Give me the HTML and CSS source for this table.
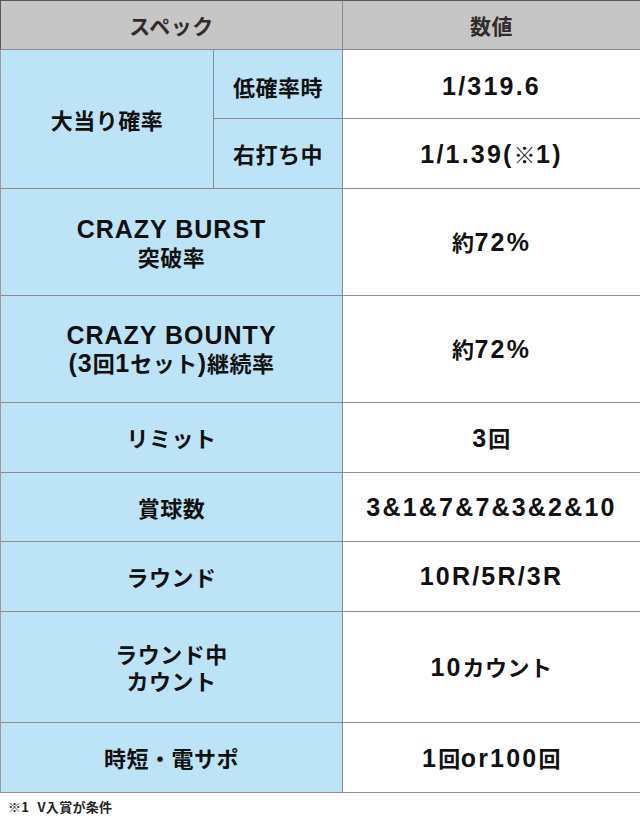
FILE: index.html
```html
<!DOCTYPE html>
<html lang="ja">
<head>
<meta charset="utf-8">
<link rel="stylesheet" href="styles.css">
</head>
<body>
<div class="spec">
  <div class="cell head span2">スペック</div>
  <div class="cell head last">数値</div>

  <div class="cell key rows2">大当り確率</div>
  <div class="cell key first">低確率時</div>
  <div class="cell val last first"><span class="n">1/319.6</span></div>
  <div class="cell key">右打ち中</div>
  <div class="cell val last"><span><span class="n">1/1.39(</span>※<span class="n">1)</span></span></div>

  <div class="cell key span2"><span class="line"><span class="n">CRAZY BURST</span></span><span class="line">突破率</span></div>
  <div class="cell val last"><span>約<span class="n">72%</span></span></div>

  <div class="cell key span2"><span class="line"><span class="n">CRAZY BOUNTY</span></span><span class="line"><span class="n">(3</span>回<span class="n">1</span>セット<span class="n">)</span>継続率</span></div>
  <div class="cell val last"><span>約<span class="n">72%</span></span></div>

  <div class="cell key span2">リミット</div>
  <div class="cell val last"><span><span class="n">3</span>回</span></div>

  <div class="cell key span2">賞球数</div>
  <div class="cell val last"><span class="n">3&amp;1&amp;7&amp;7&amp;3&amp;2&amp;10</span></div>

  <div class="cell key span2">ラウンド</div>
  <div class="cell val last"><span class="n">10R/5R/3R</span></div>

  <div class="cell key span2"><span class="line">ラウンド中<br>カウント</span></div>
  <div class="cell val last"><span><span class="n">10</span>カウント</span></div>

  <div class="cell key span2">時短・電サポ</div>
  <div class="cell val last"><span><span class="n">1</span>回<span class="n">or100</span>回</span></div>
</div>
<p class="note">※1 V入賞が条件</p>
</body>
</html>
```
FILE: styles.css
```css
html, body {
  margin: 0;
  padding: 0;
  background: #ffffff;
}

body {
  width: 640px;
  font-family: "Liberation Sans", "Noto Sans CJK JP", sans-serif;
  font-weight: bold;
  color: #111111;
}

.spec {
  display: grid;
  grid-template-columns: 213px 129px 298px;
  grid-template-rows: 50px 69px 70px 107px 107px 70px 69px 70px 111px 70px;
  box-sizing: border-box;
  border-left: 1px solid #9a9a9a;
}

.cell {
  box-sizing: border-box;
  border-right: 1px solid #8c8c8c;
  border-bottom: 1px solid #8c8c8c;
  display: flex;
  flex-direction: column;
  align-items: center;
  justify-content: center;
  text-align: center;
  font-family: "Noto Sans CJK JP", sans-serif;
  font-weight: bold;
  font-size: 22px;
  line-height: 27px;
  letter-spacing: 0.5px;
}

.span2 {
  grid-column: span 2;
}

.rows2 {
  grid-row: span 2;
}

.first {
  padding-top: 4px;
}

.head {
  background: #c5c6c5;
  color: #332b2b;
  font-size: 21px;
  border-top: 1px solid #5e5656;
  border-bottom: 1px solid #8c8c8c;
}

.spec > .head:first-child {
  margin-left: -1px;
  border-left: 1px solid #5e5656;
}

.head.last {
  border-right: 1px solid #5e5656;
}

.key {
  background: #bde3f7;
}

.val {
  background: #ffffff;
}

.last {
  border-right: 1px solid #a8a8a8;
}

.line {
  display: block;
}

.n {
  font-family: "Liberation Sans", sans-serif;
  font-weight: bold;
  font-size: 25px;
  letter-spacing: 1px;
}

.val .n {
  letter-spacing: 2.2px;
}

.note {
  margin: 0;
  padding: 5px 0 0 8px;
  font-family: "Noto Sans CJK JP", sans-serif;
  font-weight: bold;
  font-size: 13px;
  line-height: 17px;
  letter-spacing: 0.3px;
  word-spacing: 5px;
  color: #222222;
}
```
